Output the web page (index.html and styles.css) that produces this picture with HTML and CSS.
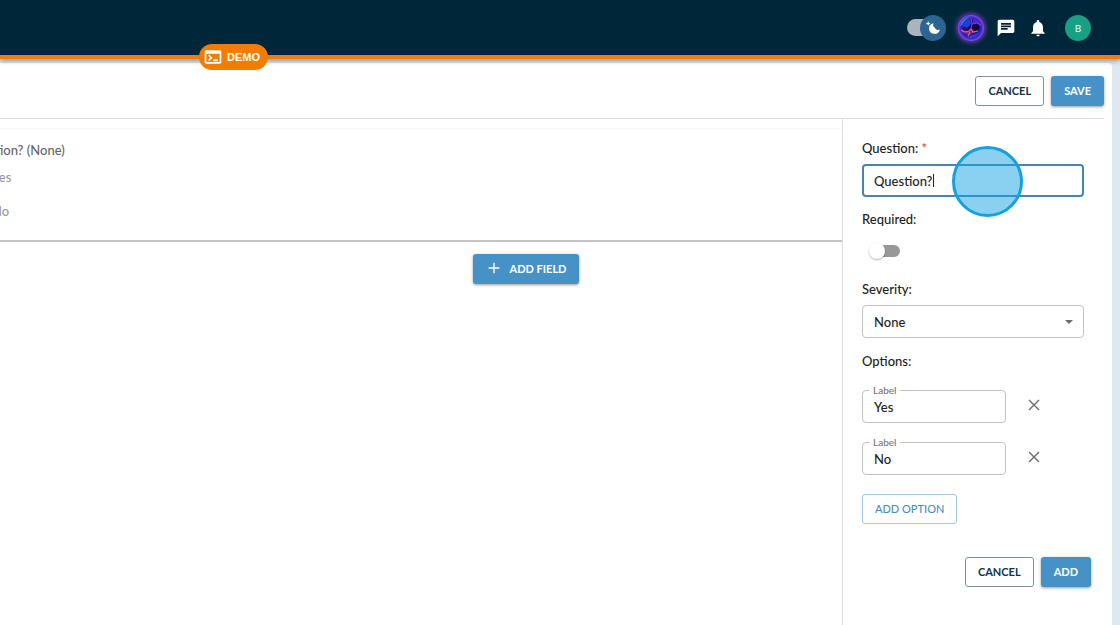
FILE: index.html
```
<!DOCTYPE html>
<html lang="en">
<head>
    <meta charset="UTF-8">
    <meta name="viewport" content="width=device-width, initial-scale=1.0">
    <title>Edit Form</title>
    <link rel="stylesheet" href="styles.css">
</head>
<body>
    <header class="topbar">
        <label class="theme-switch">
            <input type="checkbox" aria-label="Dark mode" checked>
            <span class="theme-thumb">
                <svg width="18" height="18" viewBox="0 0 18 18" fill="#fff">
                    <path d="M9.3 4.2A5.4 5.4 0 1 0 15.8 10.4 3.6 3.6 0 0 1 10.6 8.4 3.7 3.7 0 0 1 9.3 4.2z"/>
                    <path d="M4.2 2.2l.7 1.6 1.6.7-1.6.7-.7 1.6-.7-1.6-1.6-.7 1.6-.7z"/>
                </svg>
            </span>
        </label>
        <button type="button" class="icon-btn orb" aria-label="Assistant">
            <svg width="26" height="26" viewBox="0 0 26 26">
                <defs>
                    <radialGradient id="orbFill" cx="50%" cy="50%" r="50%">
                        <stop offset="0" stop-color="#170a4c"/>
                        <stop offset="0.6" stop-color="#2a0f86"/>
                        <stop offset="0.85" stop-color="#3c2fd8"/>
                        <stop offset="1" stop-color="#9a50ee"/>
                    </radialGradient>
                </defs>
                <circle cx="13" cy="13" r="13" fill="url(#orbFill)"/>
                <path d="M2 11Q4 3 12 2q-6 3-8 8z" fill="#1c8df0"/>
                <path d="M4 11q2-6 8-7l1 5-4 4z" fill="#1e3fd0"/>
                <path d="M15 3q6 1 8 8l-4-3-4 1z" fill="#5a1cd8"/>
                <path d="M14 10l5-2 3 5-5 3z" fill="#120838"/>
                <path d="M2 14q5 3 9 2 4-2 8 1-4 0-7 3-6 0-10-6z" fill="#7a2292"/>
                <path d="M3 15q4 3 8 1l2-2 2 3 5-1M12 17l-2 4" fill="none" stroke="#e0606c" stroke-width="1.2"/>
                <path d="M13 3l1 6 5-1 4 2M14 9l-1 5" fill="none" stroke="#7440ee"/>
                <path d="M8 23q9 2 15-7-6 4-10 4z" fill="#263de0"/>
            </svg>
        </button>
        <button type="button" class="icon-btn" aria-label="Messages">
            <svg width="20" height="20" viewBox="0 0 24 24" fill="#fff"><path d="M20 2H4c-1.1 0-1.99.9-1.99 2L2 22l4-4h14c1.1 0 2-.9 2-2V4c0-1.1-.9-2-2-2zM6 9h12v2H6V9zm8 5H6v-2h8v2zm4-6H6V6h12v2z"/></svg>
        </button>
        <button type="button" class="icon-btn" aria-label="Notifications">
            <svg width="20" height="20" viewBox="0 0 24 24" fill="#fff"><path d="M12 22c1.1 0 2-.9 2-2h-4c0 1.1.89 2 2 2zm6-6v-5c0-3.07-1.64-5.64-4.5-6.32V4c0-.83-.67-1.5-1.5-1.5s-1.5.67-1.5 1.5v.68C7.63 5.36 6 7.92 6 11v5l-2 2v1h16v-1l-2-2z"/></svg>
        </button>
        <button type="button" class="avatar">B</button>
        <div class="demo-badge">
            <svg width="20" height="20" viewBox="0 0 24 24" fill="#fff"><path d="M20 4H4c-1.11 0-2 .9-2 2v12c0 1.1.89 2 2 2h16c1.1 0 2-.9 2-2V6c0-1.1-.89-2-2-2zm0 14H4V8h16v10zm-2-1h-6v-2h6v2zM7.5 17l-1.41-1.41L8.67 13l-2.59-2.59L7.5 9l4 4-4 4z"/></svg>
            DEMO
        </div>
    </header>

    <main class="page">
        <div class="toolbar">
            <button type="button" class="btn btn-outline">CANCEL</button>
            <button type="button" class="btn btn-primary">SAVE</button>
        </div>
        <div class="editor">
            <section class="preview">
                <div class="preview-field">
                    <p class="preview-title">Question? (None)</p>
                    <p class="preview-option">Yes</p>
                    <p class="preview-option">No</p>
                </div>
                <div class="add-field">
                    <button type="button" class="btn btn-primary">
                        <svg width="16" height="16" viewBox="0 0 24 24" fill="#fff"><path d="M20 13h-7v7h-2v-7H4v-2h7V4h2v7h7z"/></svg>
                        ADD FIELD
                    </button>
                </div>
            </section>

            <form class="settings" id="fieldForm">
                <label class="field-label" for="question">Question: <span class="required">*</span></label>
                <div class="question-box">
                    <input type="text" class="text-input" id="question" value="Question?" autofocus>
                    <span class="caret"></span>
                    <span class="click-marker"></span>
                </div>

                <label class="field-label" for="required">Required:</label>
                <div class="switch-row">
                    <input type="checkbox" class="switch" id="required">
                </div>

                <label class="field-label" for="severity">Severity:</label>
                <div class="select-box">
                    <select class="text-input" id="severity">
                        <option>None</option>
                        <option>Low</option>
                        <option>High</option>
                    </select>
                </div>

                <p class="field-label">Options:</p>
                <div class="option-row">
                    <div class="option-box">
                        <label for="option1">Label</label>
                        <input type="text" class="text-input" id="option1" value="Yes">
                    </div>
                    <button type="button" class="remove-btn" aria-label="Remove Yes">
                        <svg width="12" height="12" viewBox="0 0 12 12"><path d="M1 1l10 10M11 1L1 11" stroke="#6b6b6b" stroke-width="1.4"/></svg>
                    </button>
                </div>
                <div class="option-row">
                    <div class="option-box">
                        <label for="option2">Label</label>
                        <input type="text" class="text-input" id="option2" value="No">
                    </div>
                    <button type="button" class="remove-btn" aria-label="Remove No">
                        <svg width="12" height="12" viewBox="0 0 12 12"><path d="M1 1l10 10M11 1L1 11" stroke="#6b6b6b" stroke-width="1.4"/></svg>
                    </button>
                </div>
                <button type="button" class="btn btn-light">ADD OPTION</button>

                <div class="form-actions">
                    <button type="button" class="btn btn-outline">CANCEL</button>
                    <button type="submit" class="btn btn-primary">ADD</button>
                </div>
            </form>
        </div>
    </main>

    <script>
        // Put the cursor after the question text
        var question = document.getElementById("question");
        question.focus();
        question.setSelectionRange(question.value.length, question.value.length);

        document.getElementById("fieldForm").addEventListener("submit", function(event) {
            event.preventDefault();
        });
    </script>
</body>
</html>
```
FILE: styles.css
```
* {
    box-sizing: border-box;
}

body {
    margin: 0;
    min-height: 100vh;
    display: flex;
    flex-direction: column;
    overflow: hidden;
    background-color: #dfe7f0;
    font-family: "Lato", "Liberation Sans", sans-serif;
    font-size: 13px;
    font-weight: 500;
    color: #222;
}

p {
    margin: 0;
}

button,
input,
select {
    font-family: inherit;
    font-weight: inherit;
}

button {
    cursor: pointer;
}

/* Header */
.topbar {
    position: relative;
    z-index: 1;
    display: flex;
    align-items: center;
    justify-content: flex-end;
    gap: 12px;
    height: 59px;
    padding-right: 29px;
    background-color: #00263a;
    border-bottom: 4px solid #f07d0a;
    box-shadow: 0 2px 5px rgba(0, 0, 0, 0.35);
}

.theme-switch {
    position: relative;
    display: flex;
    align-items: center;
    width: 39px;
    height: 26px;
}

.theme-switch input {
    appearance: none;
    margin: 0;
    width: 32px;
    height: 17px;
    border-radius: 9px;
    background-color: #aab4be;
}

.theme-thumb {
    position: absolute;
    right: 0;
    top: 0;
    display: flex;
    align-items: center;
    justify-content: center;
    width: 26px;
    height: 26px;
    border-radius: 50%;
    background-color: #2c6492;
}

.icon-btn {
    display: flex;
    padding: 0;
    border: none;
    background: none;
}

.orb {
    border-radius: 50%;
    box-shadow: 0 0 4px 2px #6038a8;
}

.avatar {
    width: 26px;
    height: 26px;
    margin-left: 5px;
    padding: 0;
    border: none;
    border-radius: 50%;
    background-color: #18a086;
    color: #dff5ef;
    font-size: 10px;
}

.demo-badge {
    position: absolute;
    left: 199px;
    top: 44px;
    display: flex;
    align-items: center;
    gap: 4px;
    height: 26px;
    padding: 0 8px 0 4px;
    border-radius: 13px;
    background-color: #f57c00;
    color: #fff;
    font-family: "Liberation Sans", sans-serif;
    font-size: 11px;
    font-weight: bold;
}

/* Page */
.page {
    flex: 1;
    display: flex;
    flex-direction: column;
    margin: 4px 8px 0 0;
    padding-right: 8px;
    border-radius: 0 4px 0 0;
    background-color: #fff;
}

.toolbar {
    display: flex;
    justify-content: flex-end;
    gap: 7px;
    padding: 13px 0 12px;
    border-bottom: 1px solid #dedede;
}

.btn {
    display: flex;
    align-items: center;
    justify-content: center;
    height: 30px;
    padding: 0 12px 2px;
    border: 1px solid transparent;
    border-radius: 3px;
    font-size: 11px;
    font-weight: bold;
}

.btn-outline {
    background-color: #fff;
    border-color: #7f929c;
    color: #12344a;
}

.btn-primary {
    background-color: #4692c6;
    color: #fff;
    box-shadow: 0 1px 3px rgba(0, 0, 0, 0.4);
}

.btn-light {
    background-color: #fff;
    border-color: #a2c8e2;
    color: #4c8fbb;
}

.editor {
    flex: 1;
    display: flex;
}

/* Preview */
.preview {
    flex: 1;
    padding-top: 9px;
}

.preview-field {
    padding: 11px 0 19px;
    border-top: 1px solid #f8f8f8;
    border-bottom: 2px solid #c4c4c4;
}

.preview-title {
    margin-left: -35px;
    line-height: 20px;
    color: #666;
}

.preview-option {
    margin: 7px 0 0 -8px;
    line-height: 20px;
    color: #999;
}

.preview-option + .preview-option {
    margin-top: 14px;
}

.add-field {
    display: flex;
    justify-content: center;
    padding: 12px 0 0 210px;
}

.add-field .btn {
    gap: 8px;
}

/* Field settings */
.settings {
    display: flex;
    flex-direction: column;
    align-items: stretch;
    width: 262px;
    padding: 19px 20px 0 19px;
    border-left: 1px solid #dedede;
}

.field-label {
    line-height: 20px;
}

.required {
    color: #e53935;
}

.text-input {
    display: block;
    width: 100%;
    height: 33px;
    padding: 0 11px;
    border: 1px solid #c2c2c2;
    border-radius: 4px;
    background-color: #fff;
    color: #222;
    font-size: 13px;
}

.text-input:focus {
    padding: 0 10px;
    border: 2px solid #4585b0;
    outline: none;
}

.question-box {
    position: relative;
    margin: 6px 0 12px;
}

.question-box .text-input {
    caret-color: transparent;
}

.caret {
    position: absolute;
    top: 10px;
    left: 71px;
    width: 1px;
    height: 13px;
    background-color: #222;
    pointer-events: none;
}

.click-marker {
    position: absolute;
    top: -18px;
    left: 90px;
    width: 71px;
    height: 71px;
    border: 3px solid #16a0df;
    border-radius: 50%;
    background-color: rgba(22, 164, 228, 0.5);
    pointer-events: none;
}

.switch-row {
    display: flex;
    align-items: center;
    height: 24px;
    margin: 10px 0 16px 9px;
}

.switch {
    appearance: none;
    position: relative;
    width: 29px;
    height: 12px;
    margin: 0;
    border-radius: 6px;
    background-color: #989898;
}

.switch::before {
    content: "";
    position: absolute;
    left: -2px;
    top: -2px;
    width: 16px;
    height: 16px;
    border-radius: 50%;
    background-color: #fff;
    box-shadow: 0 1px 2px rgba(0, 0, 0, 0.3);
}

.select-box {
    position: relative;
    margin: 6px 0 13px;
}

.select-box select {
    appearance: none;
}

.select-box::after {
    content: "";
    position: absolute;
    right: 11px;
    top: 15px;
    border: 4px solid transparent;
    border-top-color: #6b6b6b;
    border-bottom: none;
    pointer-events: none;
}

.option-row {
    display: flex;
    align-items: center;
    gap: 18px;
    margin-top: 19px;
}

.option-box {
    position: relative;
    width: 144px;
}

.option-box label {
    position: absolute;
    left: 7px;
    top: -7px;
    padding: 0 4px;
    background-color: #fff;
    color: #757575;
    font-size: 10px;
    line-height: 14px;
}

.remove-btn {
    display: flex;
    align-items: center;
    justify-content: center;
    width: 20px;
    height: 24px;
    padding: 0 0 4px;
    border: none;
    background: none;
}

.settings .btn-light {
    align-self: flex-start;
    margin-top: 19px;
    font-weight: 500;
}

.form-actions {
    display: flex;
    justify-content: flex-end;
    gap: 7px;
    margin: 33px -7px 0 0;
}
```
